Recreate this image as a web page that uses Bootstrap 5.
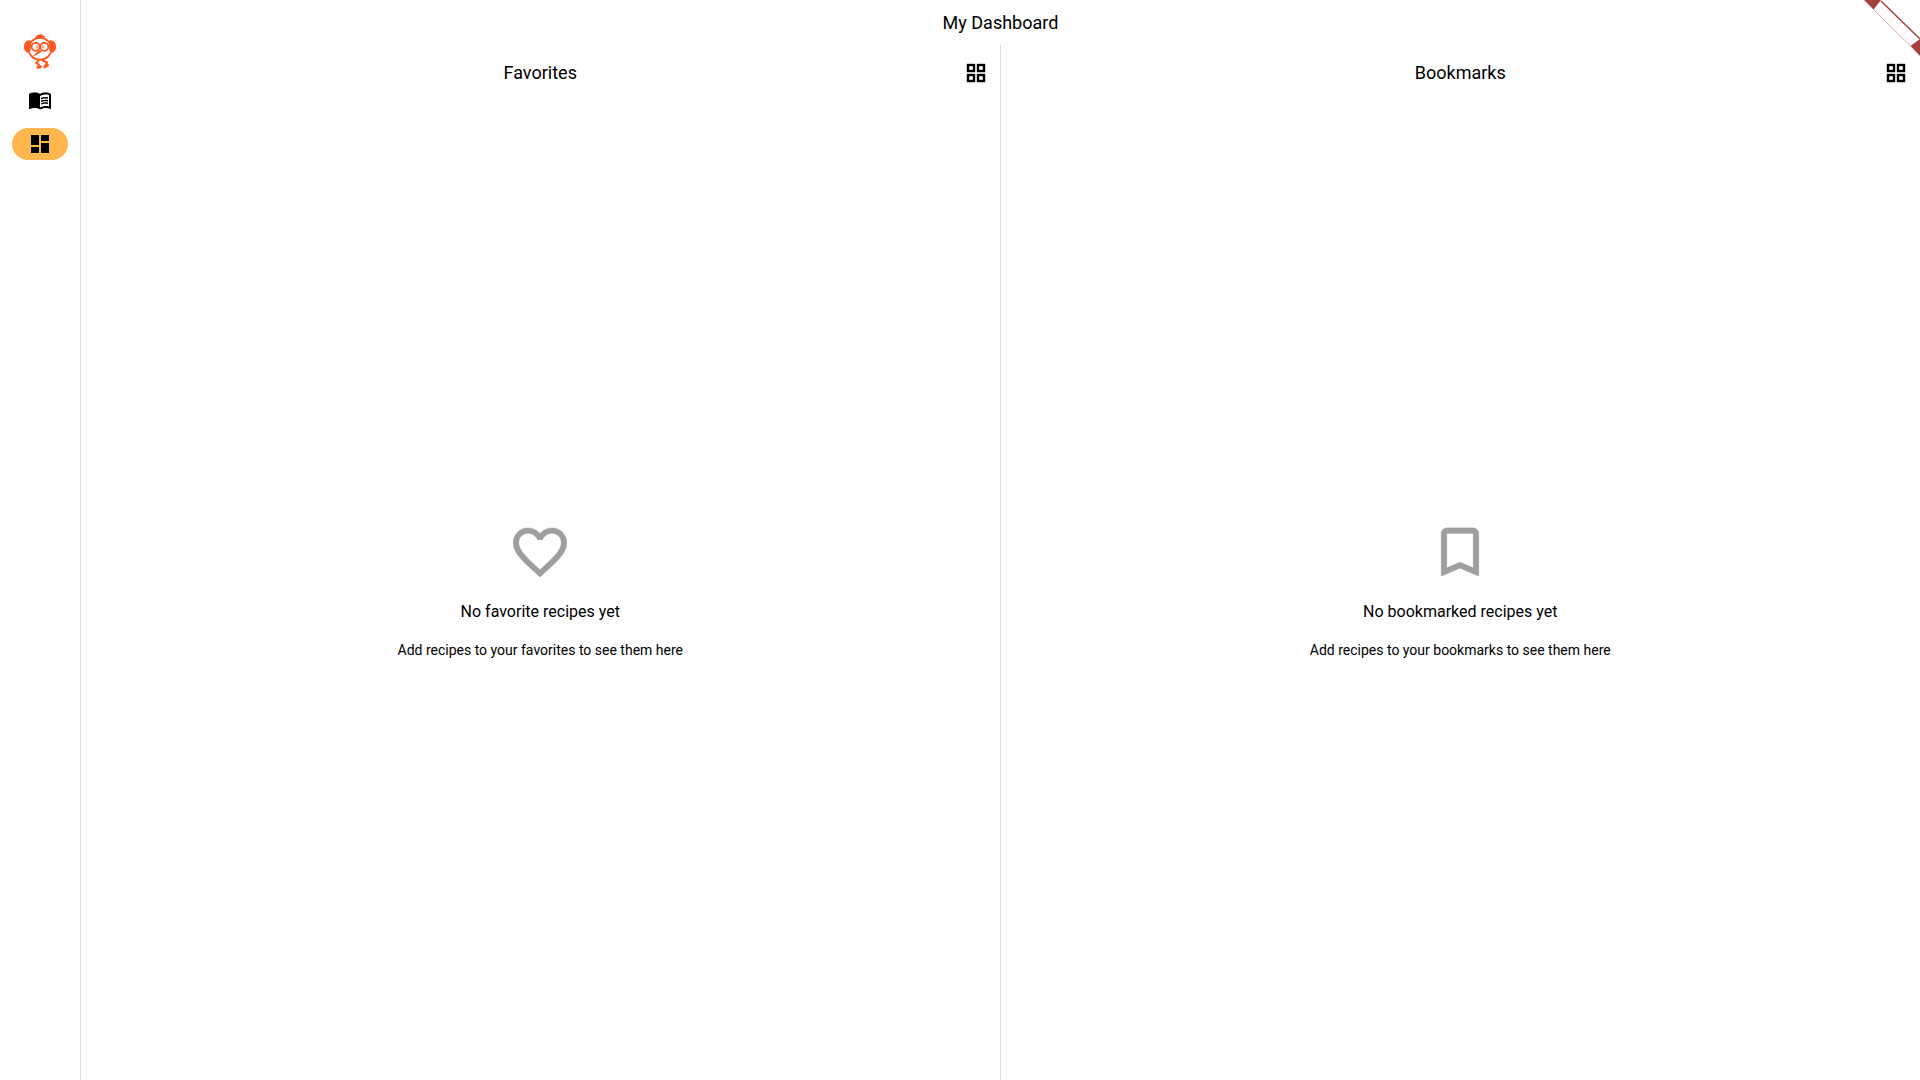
<!DOCTYPE html>
<html lang="en">
<head>
<meta charset="utf-8">
<meta name="viewport" content="width=device-width, initial-scale=1">
<title>My Dashboard</title>
<link href="https://cdn.jsdelivr.net/npm/bootstrap@5.3.0/dist/css/bootstrap.min.css" rel="stylesheet">
<style>
  body { font-family: Roboto, "Noto Sans", sans-serif; color: #000; background: #fefefe; }
  svg { display: block; fill: currentColor; }
  .rail { width: 81px; padding-top: 34px; border-right: 1px solid #ddd; }
  .rail-logo { color: #ff5722; margin-bottom: 14px; }
  .rail-link { width: 56px; height: 32px; border-radius: 16px; color: #000; }
  .rail-link.active { background: #ffb74d; }
  .page-title { font-size: 18px; line-height: 45px; font-weight: 400; }
  .pane:first-child { border-right: 1px solid #ddd; }
  .pane-head { height: 56px; }
  .pane-title { font-size: 18px; line-height: 24px; font-weight: 400; }
  .view-btn { color: #000; padding: 12px; line-height: 1; border: 0; }
  .view-btn path { stroke: currentColor; stroke-width: .4; }
  .empty-state { padding-bottom: 1px; }
  .empty-icon { color: #9e9e9e; }
  .empty-icon path { stroke: currentColor; stroke-width: .25; }
  .empty-title { font-size: 16px; line-height: 24px; font-weight: 400; }
  .empty-text { font-size: 14px; line-height: 20px; }
  .ribbon { pointer-events: none; }
</style>
<script src="https://cdn.jsdelivr.net/npm/bootstrap@5.3.0/dist/js/bootstrap.bundle.min.js" defer></script>
</head>
<body>
<div class="d-flex vh-100 overflow-hidden position-relative">
  <nav class="rail d-flex flex-column align-items-center flex-shrink-0" aria-label="Main">
    <a href="#" class="rail-logo" aria-label="Home">
      <svg width="32" height="36" viewBox="0 0 32 36">
        <g fill="none" stroke="currentColor" stroke-linecap="round">
          <ellipse cx="16" cy="14.800" rx="11.500" ry="10.900" stroke-width="1.800"/>
          <path d="M12.500 3Q14.500 1 17.500 1.200M15 3Q17.500 1.500 20 2.800" stroke-width="2"/>
          <circle cx="11.600" cy="12.800" r="4" stroke-width="1.700"/>
          <circle cx="20.400" cy="12.800" r="4" stroke-width="1.700"/>
          <path d="M13 11.500v2.500M19 11.500v2.500" stroke-width="1"/>
          <path d="M14.800 26.500L12.300 29L15.500 31.500M18.800 26.500L23 28.500L21.500 31" stroke-width="2"/>
          <path d="M14 33.300L16.500 32.800M20.800 32.800L23.500 31.300" stroke-width="3"/>
        </g>
        <path d="M6.500 6.500C2.500 5.600 0 9 0 12.800s2 6.800 6 5.500L7 13ZM25.500 6.500c4-.9 6.500 2.500 6.500 6.300s-2 6.800-6 5.500L25 13ZM8 23 14.500 16.500l4.500-.5-3 3Z"/>
      </svg>
    </a>
    <a href="#" class="rail-link d-flex align-items-center justify-content-center mb-2" aria-label="Recipes">
      <svg width="24" height="24" viewBox="0 0 24 24"><path d="M21 5c-1.110-.350-2.330-.500-3.500-.500-1.950 0-4.050.400-5.500 1.500-1.450-1.100-3.550-1.500-5.500-1.500S2.450 4.900 1 6v14.650c0 .250.250.500.500.500.100 0 .150-.050.250-.050C3.100 20.450 5.050 20 6.500 20c1.950 0 4.050.400 5.500 1.500 1.350-.850 3.800-1.500 5.500-1.500 1.650 0 3.350.300 4.750 1.050.100.050.150.050.250.050.250 0 .500-.250.500-.500V6c-.600-.450-1.250-.750-2-1zm0 13.500c-1.100-.350-2.300-.500-3.500-.500-1.700 0-4.150.650-5.500 1.500V8c1.350-.850 3.800-1.500 5.500-1.500 1.200 0 2.400.150 3.500.500v11.500z"/><path d="M17.500 10.500c.880 0 1.730.090 2.500.260V9.240c-.790-.150-1.640-.240-2.500-.240-1.700 0-3.240.290-4.500.830v1.660c1.130-.640 2.700-.990 4.500-.990zM13 12.490v1.660c1.130-.640 2.700-.990 4.500-.990.880 0 1.730.090 2.500.260V11.900c-.790-.150-1.640-.240-2.500-.240-1.700 0-3.240.300-4.500.830zM17.500 14.330c-1.700 0-3.240.290-4.500.830v1.660c1.130-.640 2.700-.990 4.500-.990.880 0 1.730.090 2.500.260v-1.520c-.790-.160-1.640-.240-2.500-.240z"/></svg>
    </a>
    <a href="#" class="rail-link active d-flex align-items-center justify-content-center mt-1" aria-label="Dashboard" aria-current="page">
      <svg width="24" height="24" viewBox="0 0 24 24"><path d="M3 13h8V3H3v10zm0 8h8v-6H3v6zm10 0h8V11h-8v10zm0-18v6h8V3h-8z"/></svg>
    </a>
  </nav>

  <main class="d-flex flex-column flex-grow-1">
    <h1 class="page-title text-center m-0">My Dashboard</h1>
    <div class="d-flex flex-grow-1">
      <section class="pane d-flex flex-column flex-grow-1 w-50">
        <header class="pane-head d-flex align-items-center justify-content-center position-relative">
          <h2 class="pane-title m-0">Favorites</h2>
          <button type="button" class="view-btn btn position-absolute end-0" aria-label="Change favorites view">
            <svg width="24" height="24" viewBox="0 0 24 24"><path fill-rule="evenodd" d="M3 3v8h8V3H3zm6 6H5V5h4v4zm-6 4v8h8v-8H3zm6 6H5v-4h4v4zm4-16v8h8V3h-8zm6 6h-4V5h4v4zm-6 4v8h8v-8h-8zm6 6h-4v-4h4v4z"/></svg>
          </button>
        </header>
        <div class="empty-state d-flex flex-column flex-grow-1 align-items-center justify-content-center">
          <svg class="empty-icon mb-3" width="64" height="64" viewBox="0 0 24 24"><path d="M16.500 3c-1.740 0-3.410.810-4.500 2.090C10.910 3.810 9.240 3 7.500 3 4.420 3 2 5.420 2 8.500c0 3.780 3.400 6.860 8.550 11.540L12 21.350l1.450-1.320C18.600 15.360 22 12.280 22 8.500 22 5.420 19.580 3 16.500 3zm-4.400 15.550l-.100.100-.100-.100C7.140 14.240 4 11.390 4 8.500 4 6.500 5.500 5 7.500 5c1.540 0 3.040.990 3.570 2.360h1.870C13.460 5.990 14.960 5 16.500 5c2 0 3.500 1.500 3.500 3.500 0 2.890-3.140 5.740-7.900 10.050z"/></svg>
          <p class="empty-title mb-3">No favorite recipes yet</p>
          <p class="empty-text m-0">Add recipes to your favorites to see them here</p>
        </div>
      </section>
      <section class="pane d-flex flex-column flex-grow-1 w-50">
        <header class="pane-head d-flex align-items-center justify-content-center position-relative">
          <h2 class="pane-title m-0">Bookmarks</h2>
          <button type="button" class="view-btn btn position-absolute end-0" aria-label="Change bookmarks view">
            <svg width="24" height="24" viewBox="0 0 24 24"><path fill-rule="evenodd" d="M3 3v8h8V3H3zm6 6H5V5h4v4zm-6 4v8h8v-8H3zm6 6H5v-4h4v4zm4-16v8h8V3h-8zm6 6h-4V5h4v4zm-6 4v8h8v-8h-8zm6 6h-4v-4h4v4z"/></svg>
          </button>
        </header>
        <div class="empty-state d-flex flex-column flex-grow-1 align-items-center justify-content-center">
          <svg class="empty-icon mb-3" width="64" height="64" viewBox="0 0 24 24"><path d="M17 3H7c-1.100 0-2 .900-2 2v16l7-3 7 3V5c0-1.100-.900-2-2-2zm0 15l-5-2.180L7 18V5h10v13z"/></svg>
          <p class="empty-title mb-3">No bookmarked recipes yet</p>
          <p class="empty-text m-0">Add recipes to your bookmarks to see them here</p>
        </div>
      </section>
    </div>
  </main>

  <svg class="ribbon position-absolute top-0 end-0" width="56" height="56" viewBox="0 0 56 56" aria-hidden="true">
    <path d="M0 0h17L9.500 9.500ZM56 39v17L46.500 46Z" fill="#a44040"/>
    <path d="M17 1 56 39" stroke="#a44040" stroke-width="1.500"/>
    <path d="M9.500 9.500 46.500 46" stroke="#d9aaaa"/>
    <path d="M24 10l-7 7M31 16l-7 7M38 22l-7 8M45 29l-7 8" stroke="#f3eded"/>
  </svg>
</div>
</body>
</html>
